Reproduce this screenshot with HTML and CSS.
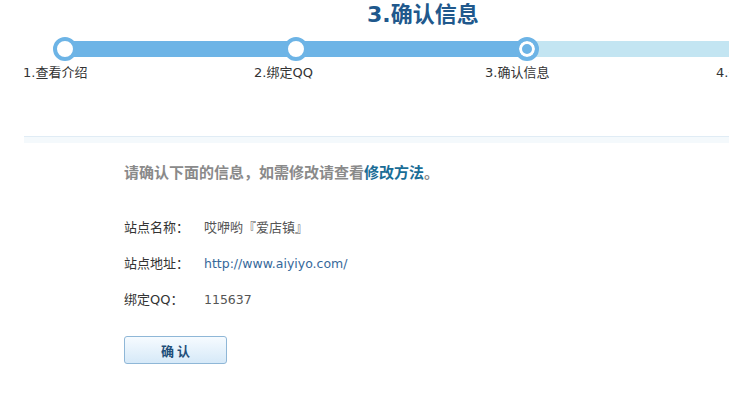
FILE: index.html
```html
<!DOCTYPE html>
<html lang="zh-CN">
<head>
<meta charset="utf-8">
<title>确认信息</title>
<link rel="stylesheet" href="styles.css">
</head>
<body>
<div class="page">
  <h1 class="title"><b>3.</b>确认信息</h1>
  <div class="steps">
    <div class="step"><span class="dot"></span><span class="lbl">1.查看介绍</span></div>
    <div class="step"><span class="dot"></span><span class="lbl">2.绑定QQ</span></div>
    <div class="step"><span class="dot current"></span><span class="lbl">3.确认信息</span></div>
    <div class="step"><span class="dot"></span><span class="lbl">4.开通完成</span></div>
  </div>
  <div class="divider">
    <div class="content">
      <p class="notice">请确认下面的信息，如需修改请查看<a href="#" class="notice-link">修改方法</a>。</p>
      <div class="row"><span class="key">站点名称：</span><span class="val">哎咿哟『爱店镇』</span></div>
      <div class="row"><span class="key">站点地址：</span><a class="val url" href="#">http://www.aiyiyo.com/</a></div>
      <div class="row"><span class="key">绑定QQ：</span><span class="val num">115637</span></div>
      <button class="btn" type="button">确 认</button>
    </div>
  </div>
</div>
</body>
</html>
```

FILE: styles.css
```css
html, body {
  margin: 0;
  padding: 0;
  background: #fff;
}
body {
  font-family: "DejaVu Sans", "Noto Sans CJK SC", sans-serif;
  font-size: 13px;
  color: #333;
  overflow: hidden;
}
.page {
  width: 729px;
  height: 401px;
  overflow: hidden;
}
.title {
  margin: 0;
  padding-left: 367px;
  font-size: 22px;
  line-height: 24px;
  height: 24px;
  font-weight: bold;
  color: #20588c;
  font-family: "Noto Sans CJK SC", sans-serif;
  white-space: nowrap;
}
.title b {
  font-family: "DejaVu Sans", sans-serif;
  font-size: 22px;
}
.steps {
  display: flex;
  margin-top: 13px;
  margin-left: 23px;
  width: 1000px;
  background:
    linear-gradient(#6db4e6, #6db4e6) 42px 4px / 462px 16px no-repeat,
    linear-gradient(#c3e5f2, #c3e5f2) 504px 4px / 600px 16px no-repeat;
}
.step {
  flex: 0 0 231px;
  display: flex;
  flex-direction: column;
  align-items: flex-start;
}
.dot {
  display: block;
  box-sizing: border-box;
  width: 24px;
  height: 24px;
  margin-left: 30px;
  border-radius: 50%;
  border: 4px solid #6db4e6;
  background: #fff;
}
.dot.current {
  background: #6db4e6;
  box-shadow: inset 0 0 0 3px #fff;
}
.lbl {
  margin-top: 4px;
  line-height: 16px;
  font-size: 13px;
  color: #333;
  white-space: nowrap;
}
.divider {
  margin-top: 55px;
  margin-left: 24px;
  border-top: 1px solid #e0ecf5;
  background: linear-gradient(#f4f9fc, #f4f9fc) 0 0 / 100% 6px no-repeat;
  padding-top: 6px;
}
.content {
  padding-left: 100px;
  padding-top: 19px;
}
.notice {
  margin: 0 0 28px;
  font-size: 15px;
  line-height: 20px;
  font-weight: bold;
  color: #8a8a8a;
  font-family: "Noto Sans CJK SC", sans-serif;
  white-space: nowrap;
}
.notice-link {
  color: #1a6d96;
  text-decoration: none;
}
.row {
  display: flex;
  line-height: 36px;
  height: 36px;
  white-space: nowrap;
}
.key {
  width: 80px;
  color: #333;
}
.val {
  color: #555;
  font-size: 13px;
}
.url,
.num {
  font-size: 12.5px;
}
.url {
  color: #36689a;
  text-decoration: none;
}
.btn {
  display: block;
  margin-top: 18px;
  width: 103px;
  height: 28px;
  border: 1px solid #8fb7d7;
  border-radius: 3px;
  background: linear-gradient(#f6fbff, #d6e9f8);
  color: #1f4e79;
  font-family: "Noto Sans CJK SC", sans-serif;
  font-size: 13px;
  font-weight: bold;
  padding: 0;
  cursor: pointer;
}
```
